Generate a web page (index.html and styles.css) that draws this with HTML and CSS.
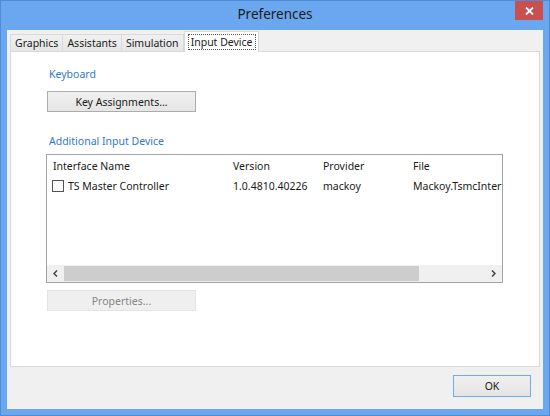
FILE: index.html
```html
<!DOCTYPE html>
<html>
<head>
<meta charset="utf-8">
<title>Preferences</title>
<link rel="stylesheet" href="styles.css">
</head>
<body>
<div class="window">
  <div class="titlebar">
    <span></span>
    <span class="title">Preferences</span>
    <button class="close" aria-label="Close">
      <svg width="9" height="8" viewBox="0 0 9 8"><path d="M1 0.5 L8 7.5 M8 0.5 L1 7.5" stroke="#fff" stroke-width="1.8"/></svg>
    </button>
  </div>
  <div class="client">
    <div class="tabs">
      <div class="tab">Graphics</div>
      <div class="tab">Assistants</div>
      <div class="tab">Simulation</div>
      <div class="tab active"><span class="focus">Input Device</span></div>
    </div>
    <div class="panel">
      <div class="group-label">Keyboard</div>
      <button class="btn wide">Key Assignments...</button>
      <div class="group-label second">Additional Input Device</div>
      <div class="listview">
        <div class="lv-line lv-header">
          <div class="col c1">Interface Name</div>
          <div class="col c2">Version</div>
          <div class="col c3">Provider</div>
          <div class="col c4">File</div>
        </div>
        <div class="lv-line lv-row">
          <div class="col c1"><span class="check"></span>TS Master Controller</div>
          <div class="col c2">1.0.4810.40226</div>
          <div class="col c3">mackoy</div>
          <div class="col c4">Mackoy.TsmcInterface.dll</div>
        </div>
        <div class="lv-fill"></div>
        <div class="hscroll">
          <span class="arrow"><svg width="5" height="7" viewBox="0 0 5 7"><path d="M4 0.5 L1 3.5 L4 6.5" fill="none" stroke="#444" stroke-width="1.5"/></svg></span>
          <div class="track"><div class="thumb"></div></div>
          <span class="arrow"><svg width="5" height="7" viewBox="0 0 5 7"><path d="M1 0.5 L4 3.5 L1 6.5" fill="none" stroke="#444" stroke-width="1.5"/></svg></span>
        </div>
      </div>
      <button class="btn wide disabled" disabled>Properties...</button>
    </div>
    <div class="footer">
      <button class="btn ok">OK</button>
    </div>
  </div>
</div>
</body>
</html>
```
FILE: styles.css
```css
* { box-sizing: border-box; }
html, body { margin: 0; padding: 0; }
body {
  width: 550px;
  height: 416px;
  font-family: "Noto Sans", "Open Sans", sans-serif;
  font-size: 10.5px;
  color: #1a1a1a;
  overflow: hidden;
}
.window {
  width: 550px;
  height: 416px;
  background: #6aa7ef;
  border: 1px solid #4f8cd8;
  padding: 0 6px 6px 6px;
  display: flex;
  flex-direction: column;
}
.titlebar {
  height: 29px;
  display: grid;
  grid-template-columns: 1fr auto 1fr;
  align-items: start;
}
.title {
  font-size: 13.5px;
  color: #1b1b1b;
  line-height: 27px;
}
.close {
  justify-self: end;
  width: 28px;
  height: 19px;
  margin: 0;
  padding: 0;
  border: none;
  background: #c9504f;
  display: flex;
  align-items: center;
  justify-content: center;
}
.client {
  flex: 1;
  background: #f0f0f0;
  padding: 1px 3px 0 3px;
  display: flex;
  flex-direction: column;
}
.tabs {
  display: flex;
  align-items: flex-end;
  height: 21px;
  margin-bottom: -1px;
}
.tab {
  height: 18px;
  line-height: 16px;
  padding: 0 4px;
  border: 1px solid #d9d9d9;
  border-bottom: none;
  border-right: none;
  background: linear-gradient(#f0f0f0, #e5e5e5);
  color: #1a1a1a;
  font-size: 10.5px;
}
.tab:nth-child(3) { border-right: 1px solid #d9d9d9; }
.tab.active {
  position: relative;
  height: 21px;
  padding: 2px 2px 0 3px;
  background: #fff;
  border: 1px solid #d9d9d9;
  border-bottom: none;
  line-height: 14px;
}
.focus {
  display: inline-block;
  border: 1px dotted #555;
  padding: 0 2px;
  line-height: 14px;
}
.panel {
  height: 316px;
  width: 530px;
  background: #fff;
  border: 1px solid #d9d9d9;
  display: flex;
  flex-direction: column;
  align-items: flex-start;
}
.group-label {
  color: #2f78cf;
  line-height: 16px;
  margin: 14px 0 0 38px;
  font-size: 10.5px;
}
.group-label.second { margin-top: 21px; }
.btn {
  font-family: "Noto Sans", "Open Sans", sans-serif;
  font-size: 10.5px;
  color: #1a1a1a;
  height: 21px;
  border: 1px solid #acacac;
  background: linear-gradient(#f0f0f0, #e5e5e5);
  padding: 0;
  margin: 0;
}
.btn.wide {
  width: 149px;
  margin: 9px 0 0 36px;
}
.btn.disabled {
  margin-top: 7px;
  background: #efefef;
  border-color: #e3e3e3;
  color: #858585;
}
.listview {
  margin: 5px 0 0 35px;
  width: 457px;
  height: 129px;
  border: 1px solid #a3a3a3;
  display: flex;
  flex-direction: column;
  overflow: hidden;
}
.lv-line {
  display: flex;
  white-space: nowrap;
}
.lv-header { height: 22px; line-height: 22px; }
.lv-row { height: 18px; line-height: 18px; }
.col { flex: 0 0 auto; overflow: hidden; }
.c1 { width: 180px; padding-left: 6px; display: flex; align-items: center; }
.lv-row .c1 { padding-left: 5px; }
.c2, .c3 { width: 90px; padding-left: 6px; }
.c4 { padding-left: 6px; width: 200px; }
.check {
  width: 12px;
  height: 12px;
  border: 1px solid #555;
  background: #fff;
  margin-right: 4px;
  flex: 0 0 auto;
}
.lv-fill { flex: 1; }
.hscroll {
  height: 17px;
  display: flex;
  background: #f0f0f0;
}
.arrow {
  width: 17px;
  display: flex;
  align-items: center;
  justify-content: center;
}
.track {
  flex: 1;
  padding: 1px 0;
}
.thumb {
  width: 355px;
  height: 100%;
  background: #cdcdcd;
}
.footer {
  flex: 1;
  display: flex;
  justify-content: flex-end;
  align-items: flex-start;
  padding: 8px 9px 0 0;
}
.btn.ok {
  width: 78px;
  height: 22px;
  border-color: #74aae3;
  background: linear-gradient(#f0f0f0, #e4e4e4);
}
```
